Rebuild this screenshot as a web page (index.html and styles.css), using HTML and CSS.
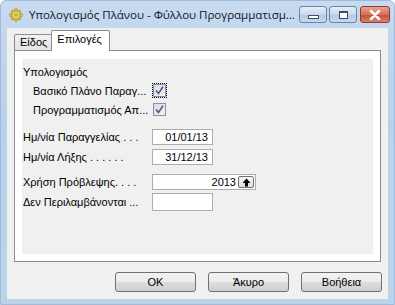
FILE: index.html
```html
<!DOCTYPE html>
<html lang="el">
<head>
  <meta charset="UTF-8">
  <title>Υπολογισμός Πλάνου</title>
  <link rel="stylesheet" href="styles.css">
</head>
<body>
  <div class="window">
    <div class="titlebar">
      <svg class="app-icon" width="14" height="14" viewBox="0 0 14 14">
        <g fill="#e9c84a" stroke="#9a8a2a" stroke-width="0.6">
          <circle cx="7" cy="2" r="1.6"/>
          <circle cx="7" cy="12" r="1.6"/>
          <circle cx="2" cy="7" r="1.6"/>
          <circle cx="12" cy="7" r="1.6"/>
          <circle cx="3.5" cy="3.5" r="1.5"/>
          <circle cx="10.5" cy="10.5" r="1.5"/>
          <circle cx="10.5" cy="3.5" r="1.5"/>
          <circle cx="3.5" cy="10.5" r="1.5"/>
          <circle cx="7" cy="7" r="4" fill="#f2d860"/>
        </g>
        <circle cx="7" cy="7" r="1.8" fill="#8fb86a"/>
      </svg>
      <div class="title">Υπολογισμός Πλάνου - Φύλλου Προγραμματισμ...</div>
      <div class="caption-btns">
        <div class="cap-btn"><span class="ico-min"></span></div>
        <div class="cap-btn"><span class="ico-max"></span></div>
        <div class="cap-btn close">
          <svg width="12" height="10" viewBox="0 0 12 10">
            <path d="M2 1 L10 9 M10 1 L2 9" stroke="#fff" stroke-width="2.6" stroke-linecap="round"/>
          </svg>
        </div>
      </div>
    </div>
    <div class="client">
      <div class="tabs">
        <div class="tab">Είδος</div>
        <div class="tab active">Επιλογές</div>
      </div>
      <div class="panel">
        <div class="panel-inner">
          <div class="row group-title">Υπολογισμός</div>
          <div class="row sub">
            <span class="label">Βασικό Πλάνο Παραγ...</span>
            <span class="focus"><span class="check">
              <svg width="9" height="9" viewBox="0 0 9 9"><path d="M1 4.5 L3.5 7.5 L8 0.8" fill="none" stroke="#4a5a8c" stroke-width="1.6"/></svg>
            </span></span>
          </div>
          <div class="row sub">
            <span class="label">Προγραμματισμός Απ...</span>
            <span class="nofocus"><span class="check">
              <svg width="9" height="9" viewBox="0 0 9 9"><path d="M1 4.5 L3.5 7.5 L8 0.8" fill="none" stroke="#4a5a8c" stroke-width="1.6"/></svg>
            </span></span>
          </div>
          <div class="row field first">
            <span class="label">Ημ/νία Παραγγελίας . . .</span>
            <span class="input date">01/01/13</span>
          </div>
          <div class="row field">
            <span class="label">Ημ/νία Λήξης . . . . . .</span>
            <span class="input date">31/12/13</span>
          </div>
          <div class="row field gap">
            <span class="label">Χρήση Πρόβλεψης. . . .</span>
            <span class="input year">2013
              <span class="spin">
                <svg width="9" height="9" viewBox="0 0 9 9"><path d="M4.5 0.5 L8.5 5 L6 5 L6 8.5 L3 8.5 L3 5 L0.5 5 Z" fill="#000"/></svg>
              </span>
            </span>
          </div>
          <div class="row field">
            <span class="label">Δεν Περιλαμβάνονται ...</span>
            <span class="input date tall"></span>
          </div>
        </div>
      </div>
      <div class="buttons">
        <button class="btn">OK</button>
        <button class="btn">Άκυρο</button>
        <button class="btn">Βοήθεια</button>
      </div>
    </div>
  </div>
</body>
</html>
```

FILE: styles.css
```css
body {
  margin: 0;
  padding: 0;
  font-family: 'Liberation Sans', Arial, sans-serif;
  font-size: 11px;
  color: #000;
}
.window {
  width: 395px;
  height: 305px;
  box-sizing: border-box;
  background: linear-gradient(#c6daf0, #b9d1ea 40%, #bcd3ec);
  border: 1px solid #a3bbd8;
  border-radius: 6px 6px 0 0;
  padding: 0 6px 5px 6px;
  display: flex;
  flex-direction: column;
}
/* Title bar */
.titlebar {
  height: 27px;
  display: flex;
  align-items: center;
  flex-shrink: 0;
}
.app-icon {
  margin-left: 2px;
  margin-right: 6px;
}
.title {
  font-family: 'Open Sans', 'Liberation Sans', sans-serif;
  font-size: 11.6px;
  color: #111a26;
  white-space: nowrap;
  flex: 1;
  letter-spacing: -0.05px;
}
.caption-btns {
  display: flex;
  gap: 2px;
  align-self: flex-start;
  margin-top: 5px;
  margin-right: -2px;
}
.cap-btn {
  width: 26px;
  height: 15px;
  border: 1px solid #6d84a0;
  border-radius: 3px;
  background: linear-gradient(#e6eef8, #c8d8ec 50%, #b3c8e2 51%, #c6d9ef);
  display: flex;
  align-items: center;
  justify-content: center;
}
.cap-btn.close {
  width: 28px;
  margin-left: 1px;
  border-color: #8a3c32;
  background: linear-gradient(#e8a493, #d4705c 50%, #c74c34 51%, #d9826a);
}
.ico-min {
  width: 9px;
  height: 2px;
  margin-top: 5px;
  border: 1px solid #3c4d64;
  background: #fff;
}
.ico-max {
  width: 7px;
  height: 5px;
  border: 1px solid #3c4d64;
  border-top-width: 2px;
  background: #fff;
}
/* Client area */
.client {
  flex: 1;
  background: #f0f0f0;
  padding: 3px 6px 0 7px;
}
.tabs {
  display: flex;
  align-items: flex-end;
  height: 19px;
  position: relative;
  z-index: 1;
}
.tab {
  height: 15px;
  padding: 0 4px 0 5px;
  border: 1px solid #898c95;
  border-bottom: none;
  border-radius: 2px 2px 0 0;
  background: linear-gradient(#f2f2f2, #e3e3e3);
  line-height: 15px;
  margin-right: -1px;
}
.tab.active {
  height: 20px;
  line-height: 16px;
  padding: 0 7px 0 5px;
  background: #fff;
  margin-bottom: -1px;
}
.panel {
  width: 367px;
  height: 212px;
  box-sizing: border-box;
  border: 1px solid #898c95;
  background: #fff;
  padding: 8px 7px 7px 7px;
}
.panel-inner {
  height: 100%;
  background: #f0f0f0;
  padding: 3px 0 0 1px;
  box-sizing: border-box;
}
.row {
  display: flex;
  align-items: center;
  height: 19px;
}
.row .label {
  width: 129px;
  white-space: nowrap;
}
.sub .label {
  padding-left: 10px;
  width: 119px;
}
.focus, .nofocus {
  width: 15px;
  height: 15px;
  box-sizing: border-box;
  display: flex;
  align-items: center;
  justify-content: center;
}
.focus {
  border: 1px dotted #000;
}
.check {
  width: 11px;
  height: 11px;
  border: 1px solid #8a91a6;
  background: linear-gradient(135deg, #d8dae2, #f4f4f6);
  display: flex;
  align-items: center;
  justify-content: center;
}
.field.first {
  margin-top: 8px;
}
.field {
  height: 20px;
}
.field.gap {
  margin-top: 5px;
}
.input {
  height: 16px;
  box-sizing: border-box;
  border: 1px solid #abadb3;
  background: #fff;
  display: flex;
  align-items: center;
  justify-content: flex-end;
  padding-right: 4px;
}
.date {
  width: 61px;
}
.tall {
  height: 18px;
}
.year {
  width: 104px;
  padding-right: 1px;
}
.spin {
  width: 16px;
  height: 12px;
  box-sizing: border-box;
  margin-left: 2px;
  border: 1px solid #707070;
  border-radius: 2px;
  background: linear-gradient(#f6f6f6, #dcdcdc);
  display: flex;
  align-items: center;
  justify-content: center;
}
/* Bottom buttons */
.buttons {
  display: flex;
  justify-content: flex-end;
  gap: 10px;
  margin-top: 10px;
  padding-right: 0;
}
.btn {
  width: 81px;
  height: 20px;
  padding: 0;
  font-family: 'Liberation Sans', Arial, sans-serif;
  font-size: 11px;
  color: #000;
  border: 1px solid #707070;
  border-radius: 3px;
  background: linear-gradient(#f2f2f2, #ebebeb 50%, #dddddd 51%, #cfcfcf);
}
.btn + .btn {
  margin-left: 2px;
}
```
